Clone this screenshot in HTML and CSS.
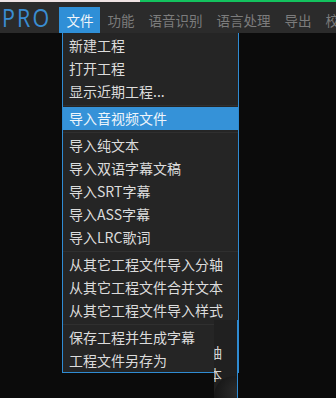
FILE: index.html
```html
<!DOCTYPE html>
<html lang="zh">
<head>
<meta charset="utf-8">
<title>PRO</title>
<link rel="stylesheet" href="styles.css">
</head>
<body>
<div class="app">
  <div class="topstrip">
    <div class="strip-light"></div>
    <div class="strip-green"></div>
  </div>
  <div class="menubar">
    <div class="logo"><span class="logo-text">PRO</span></div>
    <div class="mi active">文件</div>
    <div class="mi">功能</div>
    <div class="mi">语音识别</div>
    <div class="mi">语言处理</div>
    <div class="mi">导出</div>
    <div class="mi">校</div>
  </div>
  <div class="stage">
    <div class="dropdown">
      <div class="item">新建工程</div>
      <div class="item">打开工程</div>
      <div class="item">显示近期工程...</div>
      <div class="sep"></div>
      <div class="item hl">导入音视频文件</div>
      <div class="sep"></div>
      <div class="item">导入纯文本</div>
      <div class="item">导入双语字幕文稿</div>
      <div class="item">导入SRT字幕</div>
      <div class="item">导入ASS字幕</div>
      <div class="item">导入LRC歌词</div>
      <div class="sep"></div>
      <div class="item">从其它工程文件导入分轴</div>
      <div class="item">从其它工程文件合并文本</div>
      <div class="item">从其它工程文件导入样式</div>
      <div class="sep"></div>
      <div class="item">保存工程并生成字幕</div>
      <div class="item">工程文件另存为</div>
    </div>
    <div class="ghost">
      <span class="g g1">轴</span>
      <span class="g g2">本</span>
      <div class="ghost-shadow"></div>
    </div>
  </div>
</div>
</body>
</html>
```
FILE: styles.css
```css
html, body {
  margin: 0;
  padding: 0;
  background: #0b0b0b;
}
.app {
  width: 336px;
  height: 398px;
  overflow: hidden;
  background: #0b0b0b;
  font-family: "Noto Sans CJK SC", "Noto Sans", sans-serif;
}
.topstrip {
  display: flex;
  height: 2px;
}
.strip-light {
  width: 140px;
  background: #efe3e3;
}
.strip-green {
  flex: 1;
  background: #13c25e;
}
.menubar {
  display: flex;
  align-items: flex-end;
  height: 31px;
  background: #2b2b2b;
  box-sizing: border-box;
}
.logo {
  width: 62px;
  height: 31px;
  line-height: 31px;
  padding-left: 2px;
  box-sizing: border-box;
  white-space: nowrap;
}
.logo-text {
  display: inline-block;
  font-family: "Open Sans", "DejaVu Sans", sans-serif;
  font-size: 25px;
  color: #3a8dd2;
  letter-spacing: 2.5px;
  transform: scaleX(0.86);
  transform-origin: left center;
}
.mi {
  height: 26px;
  line-height: 26px;
  padding: 0 7px;
  font-size: 13.5px;
  color: #7c7c7c;
  white-space: nowrap;
}
.mi.active {
  background: #2f8fd7;
  color: #f2f6fa;
}
.stage {
  position: relative;
  height: 365px;
}
.dropdown {
  margin-left: 62px;
  width: 177px;
  box-sizing: border-box;
  border: 1px solid #2f8bd2;
  border-top: none;
  background: #252525;
  padding-top: 1px;
}
.item {
  height: 23px;
  line-height: 23px;
  padding-left: 6px;
  font-size: 14px;
  color: #dcdcdc;
  white-space: nowrap;
}
.item.hl {
  background: #3592d8;
  color: #eef5fb;
}
.sep {
  height: 4px;
  position: relative;
}
.sep::after {
  content: "";
  position: absolute;
  left: 0;
  right: 0;
  top: 2px;
  height: 1px;
  background: #2f2f2f;
}
.ghost {
  position: absolute;
  left: 214px;
  top: 287px;
  width: 24px;
  height: 80px;
  box-sizing: border-box;
  border-right: 1px solid #2f8bd2;
  background: #202020;
  overflow: hidden;
}
.g {
  position: absolute;
  left: -6px;
  font-size: 14px;
  line-height: 16px;
  color: #d4d4d4;
}
.g1 { top: 24px; }
.g2 { top: 46px; }
.ghost-shadow {
  position: absolute;
  left: 0;
  top: 56px;
  width: 40px;
  height: 40px;
  border-radius: 50%;
  background: radial-gradient(circle at 60% 40%, #2c2c2c 0%, #161616 70%);
}
```
